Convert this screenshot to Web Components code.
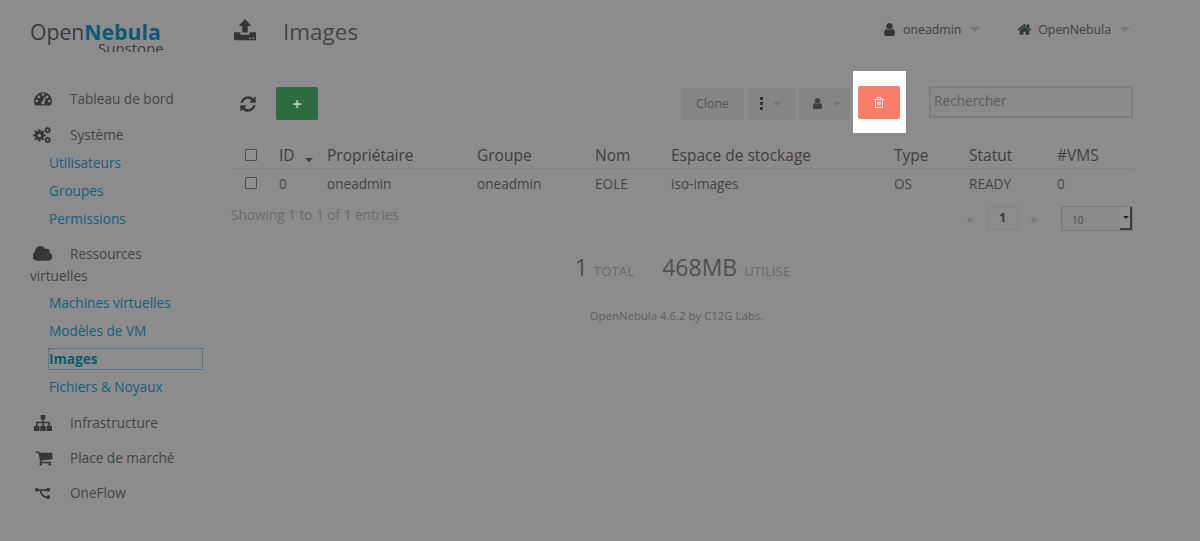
<!DOCTYPE html>
<html lang="fr">
<head>
<meta charset="utf-8">
<title>Images</title>
<style>
html, body { margin: 0; height: 100%; background: #8c8c8c; overflow: hidden; }
body { font-family: "Open Sans", "Liberation Sans", sans-serif; color: #3f3f3f; }
</style>
</head>
<body>
<sunstone-app>
	<side-nav slot="side">
		<nav-entry icon="gauge">Tableau de bord</nav-entry>
		<nav-entry icon="cogs" style="margin-top:14px">Système</nav-entry>
		<sub-entry style="margin-top:6px">Utilisateurs</sub-entry>
		<sub-entry>Groupes</sub-entry>
		<sub-entry>Permissions</sub-entry>
		<nav-entry icon="cloud" wrap style="margin-top:7px">Ressources virtuelles</nav-entry>
		<sub-entry style="margin-top:5px">Machines virtuelles</sub-entry>
		<sub-entry>Modèles de VM</sub-entry>
		<sub-entry active>Images</sub-entry>
		<sub-entry>Fichiers &amp; Noyaux</sub-entry>
		<nav-entry icon="sitemap" style="margin-top:8px">Infrastructure</nav-entry>
		<nav-entry icon="cart" style="margin-top:13px">Place de marché</nav-entry>
		<nav-entry icon="flow" style="margin-top:13px">OneFlow</nav-entry>
	</side-nav>
	<top-bar slot="top"></top-bar>
	<image-toolbar slot="main"></image-toolbar>
	<image-table slot="main"></image-table>
	<table-foot slot="main"></table-foot>
	<image-stats slot="main"></image-stats>
</sunstone-app>

<script>
// font awesome style glyphs, [viewBox, path]
const ICONS = {
	user: ["0 0 1792 1792", "M1536 1399q0 109-62.5 187t-150.5 78h-854q-88 0-150.5-78t-62.5-187q0-85 8.5-160.5t31.5-152 58.5-131 94-89 134.5-34.5q131 128 313 128t313-128q76 0 134.5 34.5t94 89 58.5 131 31.5 152 8.5 160.5zm-256-887q0 159-112.5 271.5t-271.5 112.5-271.5-112.5-112.5-271.5 112.5-271.5 271.5-112.5 271.5 112.5 112.5 271.5z"],
	home: ["0 0 1792 1792", "M1472 992v480q0 26-19 45t-45 19h-384v-384h-256v384h-384q-26 0-45-19t-19-45v-480q0-1 .5-3t.5-3l575-474 575 474q1 2 1 6zm223-69l-62 74q-8 9-21 11h-3q-13 0-21-7l-692-577-692 577q-12 8-24 7-13-2-21-11l-62-74q-8-10-7-23.5t11-21.5l719-599q32-26 76-26t76 26l244 204v-195q0-14 9-23t23-9h192q14 0 23 9t9 23v408l219 182q10 8 11 21.5t-7 23.5z"],
	refresh: ["0 0 1792 1792", "M1639 1056q0 5-1 7-64 268-268 434.5t-478 166.5q-146 0-282.5-55t-243.5-157l-129 129q-19 19-45 19t-45-19-19-45v-448q0-26 19-45t45-19h448q26 0 45 19t19 45-19 45l-137 137q71 66 161 102t187 36q134 0 250-65t186-179q11-17 53-117 8-23 30-23h192q13 0 22.5 9.5t9.5 22.5zm25-800v448q0 26-19 45t-45 19h-448q-26 0-45-19t-19-45 19-45l138-138q-148-137-349-137-134 0-250 65t-186 179q-11 17-53 117-8 23-30 23h-199q-13 0-22.5-9.5t-9.5-22.5v-7q65-268 270-434.5t480-166.5q146 0 284 55.5t245 156.5l130-129q19-19 45-19t45 19 19 45z"],
	cloud: ["0 0 1920 1792", "M1856 1152q0 159-112.5 271.5t-271.5 112.5h-1088q-185 0-316.5-131.5t-131.5-316.5q0-132 71-241.5t187-163.5q-2-28-2-43 0-212 150-362t362-150q158 0 286.5 88t187.5 230q70-62 166-62 106 0 181 75t75 181q0 75-41 138 129 30 213 134.5t84 239.5z"],
	cart: ["0 0 1792 1792", "M704 1536q0 52-38 90t-90 38-90-38-38-90 38-90 90-38 90 38 38 90zm896 0q0 52-38 90t-90 38-90-38-38-90 38-90 90-38 90 38 38 90zm128-1088v512q0 24-16.5 42.5t-40.5 21.5l-1044 122q13 60 13 70 0 16-24 64h920q26 0 45 19t19 45-19 45-45 19h-1024q-26 0-45-19t-19-45q0-11 8-31.5t16-36 21.5-40 15.5-29.5l-177-823h-204q-26 0-45-19t-19-45 19-45 45-19h256q16 0 28.5 6.5t19.5 15.5 13 24.5 8 26 5.5 29.5 4.5 26h1201q26 0 45 19t19 45z"],
	sitemap: ["0 0 20 20", "M7.500 1h5v5h-1.700v2.600h6.200q.8 0 .8.8V13H19q1 0 1 1v4q0 1-1 1h-4q-1 0-1-1v-4q0-1 1-1h1.100v-2.700h-5.300V13H12q1 0 1 1v4q0 1-1 1H8q-1 0-1-1v-4q0-1 1-1h1.200v-2.700H3.900V13H5q1 0 1 1v4q0 1-1 1H1q-1 0-1-1v-4q0-1 1-1h1.300V9.400q0-.8.8-.8h6.100V6H7.500z"],
	gauge: ["0 0 20 20", "M10 2.500C4.500 2.500 0 7 0 12.500c0 1.600.4 3 1 4.200.2.3.5.5.9.5h16.200c.4 0 .7-.2.9-.5.6-1.200 1-2.600 1-4.200 0-5.500-4.500-10-10-10zM3 13.800a1.500 1.500 0 1 1 0-3 1.500 1.500 0 0 1 0 3zm2.500-4.600a1.500 1.500 0 1 1 0-3 1.500 1.500 0 0 1 0 3zM10 6.500A1.500 1.500 0 1 1 10 3.500a1.500 1.500 0 0 1 0 3zm1.600 8.900a2 2 0 0 1-3.500-1.800c.3-.5.8-.9 1.300-1l2.400-4.800c.2-.3.6-.5.9-.3.3.2.5.5.4.8l-1.400 5.200c.4.500.4 1.300-.1 1.900zM14.500 9.200a1.500 1.500 0 1 1 0-3 1.500 1.500 0 0 1 0 3zm2.500 4.600a1.500 1.500 0 1 1 0-3 1.500 1.500 0 0 1 0 3z"],
	upload: ["0 0 24 24", "M12 0l7 7.500h-4v7.200H9V7.500H5zM0 14.500h7v1.800c0 .5.4.9.9.9h8.200c.5 0 .9-.4.9-.9v-1.800h7v7.500c0 .8-.6 1.300-1.300 1.300H1.300C.6 23.300 0 22.800 0 22zm17.500 5.300a1 1 0 1 0 0 2 1 1 0 0 0 0-2zm3.400 0a1 1 0 1 0 0 2 1 1 0 0 0 0-2z"]
};

function icon(name, size) {
	const [box, d] = ICONS[name];
	return `<svg width="${size}" height="${size}" viewBox="${box}" fill="currentColor" aria-hidden="true"><path d="${d}"/></svg>`;
}

// gears and the flow fork are built from shapes, not worth a path
function cogsIcon() {
	const gear = (cx, cy, r, n, w) => {
		let s = "";
		for (let i = 0; i < n; i++) {
			s += `<rect x="${cx - w / 2}" y="${cy - r}" width="${w}" height="${r * 2}" rx=".4" transform="rotate(${i * 180 / n} ${cx} ${cy})"/>`;
		}
		return s;
	};
	return `<svg width="19" height="18" viewBox="0 0 21 20" fill="currentColor" aria-hidden="true">
		${gear(7, 10.5, 6.8, 4, 2.6)}<circle cx="7" cy="10.5" r="4.9"/><circle cx="7" cy="10.5" r="1.9" fill="#8c8c8c"/>
		${gear(16.3, 4.5, 3.7, 4, 1.4)}<circle cx="16.3" cy="4.5" r="2.8"/><circle cx="16.3" cy="4.5" r="1.1" fill="#8c8c8c"/>
		${gear(16.3, 15.5, 3.7, 4, 1.4)}<circle cx="16.3" cy="15.5" r="2.8"/><circle cx="16.3" cy="15.5" r="1.1" fill="#8c8c8c"/>
	</svg>`;
}
function flowIcon() {
	return `<svg width="15" height="11" viewBox="0 0 15 11" fill="none" stroke="currentColor" stroke-width="1.6" aria-hidden="true">
		<circle cx="1.800" cy="1.800" r="1.100"/><circle cx="13.200" cy="1.800" r="1.100"/><circle cx="13.200" cy="9.200" r="1.100"/>
		<path d="M3 2.300l9-.4M5.500 2.500c.8 4 2.500 6.700 6.500 6.700"/>
	</svg>`;
}

// left padding of each side menu glyph, they are not all the same width
const NAV_GLYPHS = {
	gauge: [4, () => icon("gauge", 18)],
	cogs: [3, cogsIcon],
	cloud: [3, () => icon("cloud", 20)],
	sitemap: [4, () => icon("sitemap", 18)],
	cart: [5, () => icon("cart", 18)],
	flow: [5, flowIcon]
};

class SunstoneApp extends HTMLElement {
	constructor() {
		super();
		this.attachShadow({ mode: "open" }).innerHTML = `
			<style>
				:host { display: grid; grid-template-columns: 232px 901px; grid-template-rows: 66px auto; width: 1200px; }
				.logo { padding: 20px 0 0 30px; height: 32px; overflow: hidden; position: relative; color: #3a3a3a; font-size: 21.200px; line-height: 24px; }
				.logo b { color: #0b5a72; font-weight: 700; }
				.logo span { position: absolute; left: 98px; top: 38px; font-size: 15px; line-height: 20px; }
				.side { grid-row: 2; }
				.main { grid-row: 2; }
			</style>
			<div class="logo">Open<b>Nebula</b><span>Sunstone</span></div>
			<slot name="top"></slot>
			<div class="side"><slot name="side"></slot></div>
			<div class="main"><slot name="main"></slot></div>`;
	}
}

class SideNav extends HTMLElement {
	constructor() {
		super();
		this.attachShadow({ mode: "open" }).innerHTML = `
			<style>:host { display: flex; flex-direction: column; padding: 22px 29px 0 30px; font-size: 13.600px; line-height: 22px; }</style>
			<slot></slot>`;
	}
}

class NavEntry extends HTMLElement {
	constructor() {
		super();
		const [pad, glyph] = NAV_GLYPHS[this.getAttribute("icon")];
		this.attachShadow({ mode: "open" }).innerHTML = `
			<style>
				:host { display: block; color: #454545; }
				:host([wrap]) { padding-right: 50px; }
				.i { display: inline-flex; width: 40px; height: 22px; align-items: center; padding-left: ${pad}px; box-sizing: border-box; vertical-align: top; color: #353535; }
			</style>
			<span class="i">${glyph()}</span><slot></slot>`;
	}
}

class SubEntry extends HTMLElement {
	constructor() {
		super();
		this.attachShadow({ mode: "open" }).innerHTML = `
			<style>
				:host { display: block; height: 22px; margin: 0 0 6px 18px; padding-left: 1px; color: #13617b; white-space: nowrap; }
				:host([active]) { font-weight: 700; color: #0b5a72; outline: 1px dotted #1b6f8a; outline-offset: -1px; }
			</style>
			<slot></slot>`;
	}
}

class TopBar extends HTMLElement {
	constructor() {
		super();
		this.attachShadow({ mode: "open" }).innerHTML = `
			<style>
				:host { display: flex; align-items: flex-start; padding: 17px 3px 0 2px; color: #3f3f3f; }
				.up { color: #353535; height: 26px; width: 49px; margin-top: 2px; }
				h1 { margin: 0; font-size: 22.500px; line-height: 30px; font-weight: 400; color: #454545; flex: 1; }
				.menu { display: flex; align-items: center; height: 22px; font-size: 12.300px; margin-top: 1px; }
				.menu svg { margin-right: 6px; color: #353535; }
				.caret { width: 0; height: 0; border: 5px solid transparent; border-top-color: #787878; border-bottom: 0; margin-left: 9px; }
				.m1 { margin-right: 37px; }
			</style>
			<span class="up">${icon("upload", 22)}</span>
			<h1>Images</h1>
			<span class="menu m1">${icon("user", 15)}oneadmin<i class="caret"></i></span>
			<span class="menu">${icon("home", 15)}OpenNebula<i class="caret"></i></span>`;
	}
}

class ImageToolbar extends HTMLElement {
	constructor() {
		super();
		this.attachShadow({ mode: "open" }).innerHTML = `
			<style>
				:host { display: flex; align-items: center; height: 33px; margin-top: 21px; padding-left: 7px; position: relative; }
				.refresh { width: 18px; height: 18px; color: #353535; margin-right: 19px; }
				.add { width: 42px; height: 33px; border-radius: 2px; background: #2c6c40; color: #b3c9b8; display: flex; align-items: center; justify-content: center; font-size: 16px; font-weight: 700; }
				.btn { height: 32px; border-radius: 2px; background: #858585; color: #565656; display: flex; align-items: center; justify-content: center; font-size: 12.500px; box-sizing: border-box; }
				.clone { width: 63px; margin-left: 363px; }
				.dots { width: 48px; margin-left: 4px; gap: 10px; padding-right: 3px; }
				.own { width: 51px; margin-left: 3px; gap: 9px; padding-left: 3px; color: #3f3f3f; }
				.caret { width: 0; height: 0; border: 4.500px solid transparent; border-top-color: #747474; border-bottom: 0; }
				.dot3 { display: flex; flex-direction: column; gap: 2px; }
				.dot3 i { display: block; width: 3px; height: 3px; background: #333; }
				.hi { width: 48px; height: 47px; padding: 15px 0 0 5px; background: #fff; margin-left: 3px; margin-top: -3px; z-index: 1; }
				.del { width: 42px; height: 33px; border-radius: 2px; background: #f97d67; color: #ffe3dd; display: flex; align-items: center; justify-content: center; }
				.search { width: 204px; height: 32px; box-sizing: border-box; align-self: flex-start; margin: -1px 0 0 23px; border: 2px solid #7e7e7e; background: #8a8a8a; color: #5c5c5c; font-size: 13.700px; padding: 0 3px; line-height: 26px; }
			</style>
			<span class="refresh">${icon("refresh", 18)}</span>
			<span class="add">+</span>
			<span class="btn clone">Clone</span>
			<span class="btn dots"><span class="dot3"><i></i><i></i><i></i></span><i class="caret"></i></span>
			<span class="btn own">${icon("user", 13)}<i class="caret"></i></span>
			<span class="hi"><span class="del"><svg width="10" height="11" viewBox="0 0 10 11" fill="none" stroke="currentColor" aria-hidden="true"><path d="M0 2.500h10M3 2.500V.5h4v2M1.500 2.500v8h7v-8M3.700 4.500v4M5 4.500v4M6.300 4.500v4"/></svg></span></span>
			<span class="search">Rechercher</span>`;
	}
}

class ImageTable extends HTMLElement {
	constructor() {
		super();
		this.attachShadow({ mode: "open" }).innerHTML = `
			<style>
				:host { display: block; margin-top: 17px; }
				table { border-collapse: collapse; table-layout: fixed; width: 901px; }
				th { font-weight: 400; font-size: 15.500px; text-align: left; height: 31px; padding: 5px 0 0; box-sizing: border-box; color: #3f3f3f; border-bottom: 1px solid #828282; white-space: nowrap; }
				td { font-size: 13.600px; height: 29px; padding: 0; color: #454545; white-space: nowrap; }
				.box { display: block; width: 10px; height: 10px; border: 1px solid #4d4d4d; border-radius: 1px; margin-left: 13px; background: #8f8f8f; }
				.sort { display: inline-block; width: 0; height: 0; border: 4px solid transparent; border-top-color: #3f3f3f; border-bottom: 0; margin-left: 10px; vertical-align: -1px; }
			</style>
			<table>
				<colgroup><col style="width:47px"><col style="width:48px"><col style="width:150px"><col style="width:118px"><col style="width:76px"><col style="width:223px"><col style="width:75px"><col style="width:88px"><col></colgroup>
				<thead><tr><th><span class="box"></span></th><th>ID<i class="sort"></i></th><th>Propriétaire</th><th>Groupe</th><th>Nom</th><th>Espace de stockage</th><th>Type</th><th>Statut</th><th>#VMS</th></tr></thead>
				<tbody><tr><td><span class="box"></span></td><td>0</td><td>oneadmin</td><td>oneadmin</td><td>EOLE</td><td>iso-images</td><td>OS</td><td>READY</td><td>0</td></tr></tbody>
			</table>`;
	}
}

class TableFoot extends HTMLElement {
	constructor() {
		super();
		this.attachShadow({ mode: "open" }).innerHTML = `
			<style>
				:host { display: flex; align-items: flex-start; margin-top: 8px; font-size: 13.600px; color: #6a6a6a; }
				.info { flex: 1; margin-left: -1px; line-height: 18px; }
				.page { display: flex; align-items: center; height: 25px; font-size: 12px; color: #707070; }
				.page b { display: block; width: 31px; height: 24px; box-sizing: border-box; border: 1px solid #858585; border-radius: 2px; margin: 0 13px 0 14px; text-align: center; line-height: 22px; font-size: 12.500px; color: #3a3a3a; }
				.size { width: 72px; height: 25px; box-sizing: border-box; margin-left: 24px; border: 1px solid #787878; background: #8a8a8a; position: relative; color: #4a4a4a; font-size: 10px; line-height: 27px; padding-left: 10px; }
				.arrow { position: absolute; right: 0; top: 0; width: 12px; bottom: 0; border-right: 2px solid #3d3d3d; border-bottom: 2px solid #3d3d3d; background: #8f8f8f; box-sizing: border-box; }
				.arrow::after { content: ""; position: absolute; left: 3px; top: 9px; border: 3px solid transparent; border-top-color: #222; border-bottom: 0; }
			</style>
			<span class="info">Showing 1 to 1 of 1 entries</span>
			<span class="page">«<b>1</b>»</span>
			<span class="size">10<i class="arrow"></i></span>`;
	}
}

class ImageStats extends HTMLElement {
	constructor() {
		super();
		this.attachShadow({ mode: "open" }).innerHTML = `
			<style>
				:host { display: block; text-align: center; margin-top: 20px; }
				.row { display: flex; justify-content: center; align-items: baseline; height: 32px; line-height: 32px; font-size: 23px; color: #505050; }
				.row small { font-size: 13.300px; color: #6a6a6a; margin-left: 6px; }
				.row span + span { margin-left: 28px; }
				.row span + span small { margin-left: 7px; }
				.foot { margin-top: 25px; padding-right: 12px; font-size: 11.400px; line-height: 16px; color: #5f5f5f; }
			</style>
			<div class="row"><span>1<small>TOTAL</small></span><span>468MB<small>UTILISE</small></span></div>
			<div class="foot">OpenNebula 4.6.2 by C12G Labs.</div>`;
	}
}

customElements.define("sunstone-app", SunstoneApp);
customElements.define("side-nav", SideNav);
customElements.define("nav-entry", NavEntry);
customElements.define("sub-entry", SubEntry);
customElements.define("top-bar", TopBar);
customElements.define("image-toolbar", ImageToolbar);
customElements.define("image-table", ImageTable);
customElements.define("table-foot", TableFoot);
customElements.define("image-stats", ImageStats);
</script>
</body>
</html>
